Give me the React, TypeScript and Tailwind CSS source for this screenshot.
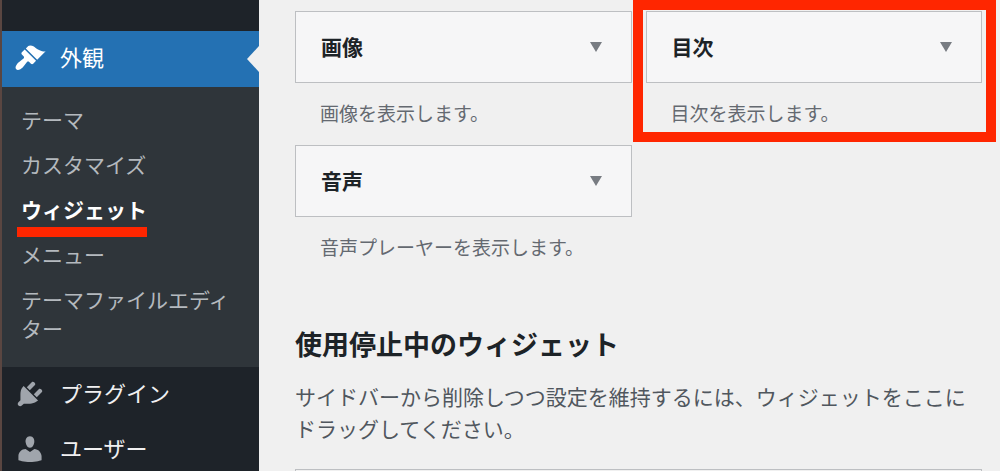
import React from 'react'
import clsx from 'clsx'

const menuIcons = {
  appearance:
    'M14.48 11.06L7.41 3.99l1.5-1.5c.5-.56 2.3-.47 3.51.32 1.21.8 1.43 1.28 2.91 2.1 1.18.64 2.45 1.26 4.45.85zm-.71.71L6.7 4.7 4.93 6.47c-.39.39-.39 1.02 0 1.41l1.06 1.06c.39.39.39 1.03 0 1.42-.6.6-1.43 1.11-2.21 1.69-.35.26-.7.53-1.01.84C1.43 14.23.4 16.08 1.4 17.07c.99 1 2.84-.03 4.18-1.36.31-.31.58-.66.85-1.02.57-.78 1.08-1.61 1.69-2.21.39-.39 1.02-.39 1.41 0l1.06 1.06c.39.39 1.02.39 1.41 0z',
  plugins:
    'M13.11 4.36L9.87 7.6 8 5.73l3.24-3.24c.35-.34 1.05-.2 1.56.32.52.51.66 1.21.31 1.55zm-8 1.77l.91-1.12 9.01 9.01-1.19.84c-.71.71-2.63 1.16-3.82 1.16H6.14L4.9 17.26c-.59.59-1.54.59-2.12 0-.59-.58-.59-1.53 0-2.12l1.24-1.24v-3.88c0-1.13.4-3.19 1.09-3.89zm7.26 3.97l3.24-3.24c.34-.35 1.04-.21 1.55.31.52.51.66 1.21.31 1.55l-3.24 3.25z',
  users:
    'M10 9.25c-2.27 0-2.73-3.44-2.73-3.44C7 4.02 7.82 2 9.97 2c2.16 0 2.98 2.02 2.71 3.81 0 0-.41 3.44-2.68 3.44zm0 2.57L12.72 10c2.39 0 4.52 2.33 4.52 4.53v2.49s-3.65 1.13-7.24 1.13c-3.65 0-7.24-1.13-7.24-1.13v-2.49c0-2.25 1.94-4.48 4.47-4.48z',
}

const submenu = [
  { label: 'テーマ' },
  { label: 'カスタマイズ' },
  { label: 'ウィジェット', current: true },
  { label: 'メニュー' },
  { label: 'テーマファイルエディター' },
]

const widgets = [
  { title: '画像', description: '画像を表示します。' },
  { title: '目次', description: '目次を表示します。', highlighted: true },
  { title: '音声', description: '音声プレーヤーを表示します。' },
]

type MenuItemProps = {
  icon: keyof typeof menuIcons
  label: string
  active?: boolean
}

function MenuItem({ icon, label, active = false }: MenuItemProps) {
  return (
    <a
      href="#"
      className={clsx(
        'relative flex items-center gap-[14px] pb-0.5 pl-3 text-[22px] leading-8',
        active ? 'h-14 bg-[#2471b3] text-white' : 'h-[55px] text-[#f0f0f1]'
      )}
    >
      <svg
        viewBox="0 0 20 20"
        className={clsx('size-8 shrink-0', active ? 'fill-white' : 'fill-[#a0a5ac]')}
        aria-hidden="true"
      >
        <path d={menuIcons[icon]} />
      </svg>
      <span className="pb-1">{label}</span>
      {active && (
        <svg
          viewBox="0 0 12 26"
          className="absolute right-0 top-[15px] h-[26px] w-3 fill-[#f0f0f0]"
          aria-hidden="true"
        >
          <path d="M12 0v26L0 13z" />
        </svg>
      )}
    </a>
  )
}

function Sidebar() {
  return (
    <nav className="w-[259px] shrink-0 border-l-2 border-[#5a4641] bg-[#1e2329] pt-[31px]">
      <MenuItem icon="appearance" label="外観" active />
      <ul className="bg-[#2f353a] pt-[10px] pb-4">
        {submenu.map((item) => (
          <li key={item.label} className="py-2 pr-6 pl-[19px] text-[21px] leading-[29px]">
            <a
              href="#"
              className={clsx(
                'relative block',
                item.current ? 'w-fit font-bold text-white' : 'text-[#b4b9be]'
              )}
            >
              {item.label}
              {item.current && (
                <span className="absolute top-8 right-0 -left-1 h-[10px] bg-[#ff2600]" />
              )}
            </a>
          </li>
        ))}
      </ul>
      <MenuItem icon="plugins" label="プラグイン" />
      <MenuItem icon="users" label="ユーザー" />
    </nav>
  )
}

type WidgetProps = {
  title: string
  description: string
  highlighted?: boolean
}

function Widget({ title, description, highlighted = false }: WidgetProps) {
  return (
    <div className="relative">
      <button
        type="button"
        className="flex h-[72px] w-full items-center justify-between border border-[#bdbfc2] bg-[#f6f6f7] pr-[29px] pl-[25px] text-left"
      >
        <span className="pb-0.5 text-[21px] leading-8 font-bold text-[#1d2327]">{title}</span>
        <svg viewBox="0 0 12 10" className="h-[10px] w-3 fill-[#787c82]" aria-hidden="true">
          <path d="M0 0h12L6 10z" />
        </svg>
      </button>
      <p className="pt-[14px] pb-4 pl-[25px] text-[19px] leading-8 text-[#646970]">
        {description}
      </p>
      {highlighted && (
        <div className="pointer-events-none absolute -top-[11px] -right-[14px] bottom-[3px] -left-[13px] border-[10px] border-[#ff2600]" />
      )}
    </div>
  )
}

export default function App() {
  return (
    <div
      lang="ja"
      className="flex h-screen overflow-hidden bg-[#f0f0f0] font-['Noto_Sans_CJK_JP',sans-serif]"
    >
      <Sidebar />
      <main className="min-w-0 flex-1 pt-[11px] pr-[18px] pl-9">
        <section className="grid grid-cols-2 gap-x-[14px]">
          {widgets.map((widget) => (
            <Widget key={widget.title} {...widget} />
          ))}
        </section>
        <section className="pt-[47px]">
          <h2 className="text-[27px] leading-9 font-bold text-[#1d2327]">
            使用停止中のウィジェット
          </h2>
          <p className="pt-[18px] text-[21px] leading-8 text-[#50575e]">
            サイドバーから削除しつつ設定を維持するには、ウィジェットをここにドラッグしてください。
          </p>
          <div className="mt-[25px] h-20 border border-[#bdbfc2]" />
        </section>
      </main>
    </div>
  )
}
